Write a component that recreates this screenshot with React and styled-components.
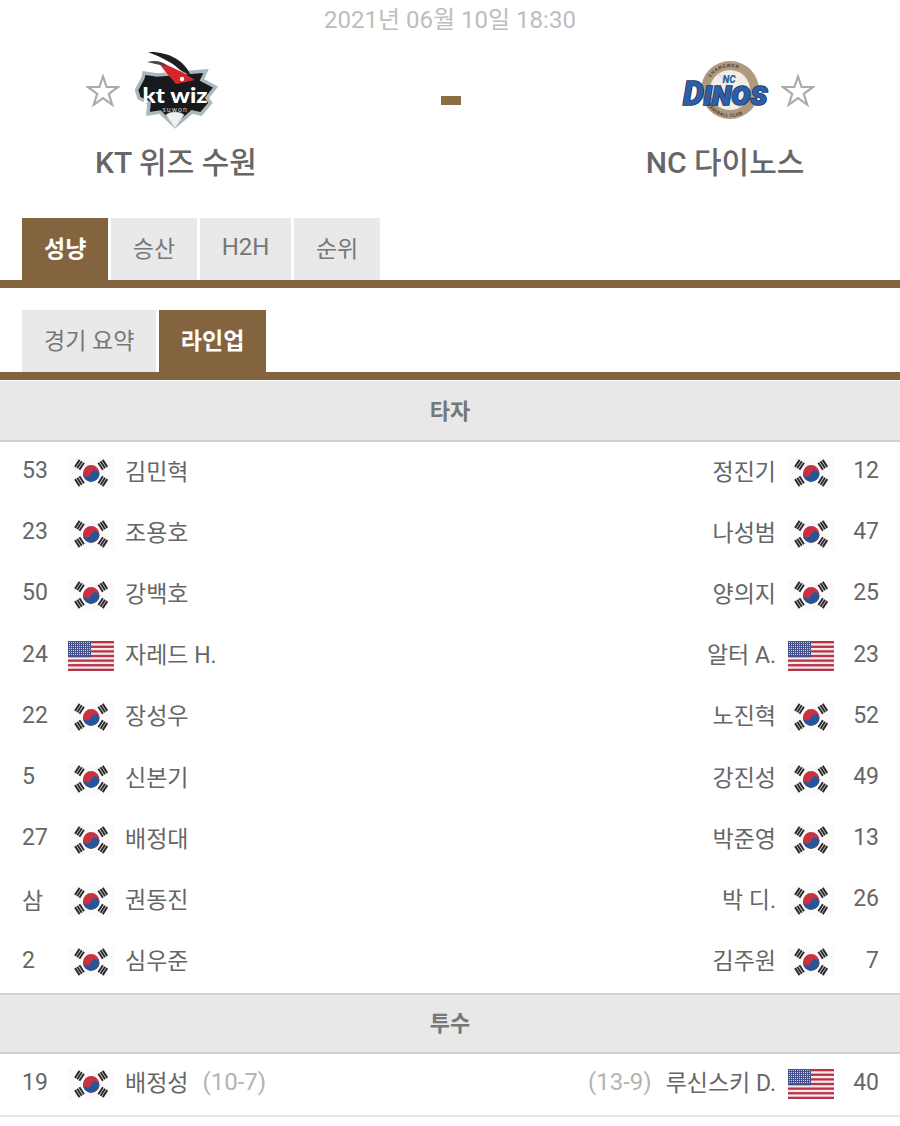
import styled, { createGlobalStyle } from "styled-components"

const GlobalStyle = createGlobalStyle`
  html, body { margin: 0; padding: 0; background: #fff; }
  body { font-family: Roboto, "Noto Sans CJK KR", sans-serif; color: #666; }
  * { box-sizing: border-box; }
`

const Page = styled.div`
  width: 900px;
  height: 1126px;
  overflow: hidden;
`

const DateLine = styled.div`
  height: 42px;
  line-height: 41px;
  text-align: center;
  font-size: 24px;
  color: #bdbdbd;
`

const Match = styled.div`
  display: grid;
  grid-template-columns: 352px 1fr 350px;
  height: 176px;
`

const Team = styled.div`
  display: flex;
  flex-direction: column;
`

const LogoRow = styled.div`
  display: flex;
  align-items: center;
  height: 90px;
  margin-top: 4px;
  gap: ${(p) => p.$gap}px;
  justify-content: ${(p) => (p.$right ? "flex-end" : "flex-start")};
  padding: ${(p) => (p.$right ? "0 85px 0 0" : "0 0 0 86px")};
`

const TeamName = styled.div`
  margin-top: 7px;
  text-align: center;
  font-size: 30px;
  font-weight: 500;
  line-height: 40px;
  color: #666;
`

const Score = styled.div`
  display: flex;
  justify-content: center;
  padding-top: 54px;
`

const ScoreDash = styled.div`
  width: 20px;
  height: 9px;
  background: #8b6d46;
`

const TabRow = styled.div`
  display: flex;
  gap: 2.5px;
  height: 70px;
  padding-left: 22px;
  border-bottom: 8px solid #84643f;
`

const Tab = styled.div`
  display: flex;
  align-items: center;
  justify-content: center;
  padding: 0 22px 5px;
  height: 62px;
  font-size: ${(p) => (p.$latin ? "24px" : "23px")};
  background: ${(p) => (p.$active ? "#84643f" : "#e9e9e9")};
  color: ${(p) => (p.$active ? "#fff" : "#777")};
  font-weight: ${(p) => (p.$active ? 700 : 400)};
`

const SubTabs = styled(TabRow)`
  margin-top: 22px;
`

const SectionHead = styled.div`
  display: flex;
  align-items: center;
  justify-content: center;
  height: 61px;
  padding-bottom: 4px;
  margin-top: ${(p) => (p.$first ? "1px" : "0")};
  background: #e8e8e8;
  border-top: ${(p) => (p.$first ? "0" : "2px solid #d2d2d2")};
  border-bottom: 2px solid #d2d2d2;
  font-size: 22px;
  font-weight: 700;
  color: #777;
`

const Row = styled.div`
  display: flex;
  justify-content: space-between;
  height: 61.2px;
  padding: 0 21px 0 22px;
`

const LastRow = styled(Row)`
  height: 63px;
  border-bottom: 2px solid #e6e6e6;
`

const Side = styled.div`
  display: flex;
  align-items: center;
  padding-bottom: 4px;
  flex-direction: ${(p) => (p.$right ? "row-reverse" : "row")};
  font-size: 23px;
  color: #666;
`

const Num = styled.span`
  width: ${(p) => (p.$right ? "45px" : "46px")};
  text-align: ${(p) => (p.$right ? "right" : "left")};
`

const Name = styled.span`
  margin: ${(p) => (p.$right ? "0 12px 0 0" : "0 0 0 11px")};
  padding-bottom: 2px;
  font-size: 23px;
  white-space: nowrap;
`

const Record = styled.span`
  color: #b4b4b4;
  font-size: 24px;
  margin: ${(p) => (p.$right ? "0 14px 0 0" : "0 0 0 14px")};
`

const FlagBox = styled.svg`
  display: block;
  width: 46px;
  height: 30px;
  margin-top: 4px;
  flex: none;
`

function Star() {
  return (
    <svg width="34" height="34" viewBox="0 0 34 34">
      <polygon
        points="17,2.5 20.6,13 32,13 22.8,19.8 26.2,30.8 17,24.2 7.8,30.8 11.2,19.8 2,13 13.4,13"
        fill="none"
        stroke="#ababab"
        strokeWidth="2.2"
      />
    </svg>
  )
}

// trigram blocks sit square to the line from the centre of the flag
const trigrams = [
  [11.5, 6.8, -57],
  [34.8, 6.8, 57],
  [11.5, 23.2, 57],
  [34.8, 23.2, -57],
]

function KoreaFlag() {
  return (
    <FlagBox viewBox="0 0 46 30">
      <rect width="46" height="30" fill="#fbfbfb" />
      {trigrams.map(([x, y, r]) => (
        <g key={`${x}-${y}`} transform={`translate(${x} ${y}) rotate(${r})`} fill="#2b2b2b">
          <rect x="-4.2" y="-3.6" width="8.4" height="2" />
          <rect x="-4.2" y="-1" width="8.4" height="2" />
          <rect x="-4.2" y="1.6" width="8.4" height="2" />
        </g>
      ))}
      <circle cx="23.2" cy="15.4" r="8.3" fill="#c8313f" />
      <path
        d="M14.9 15.4a8.3 8.3 0 0 0 16.6 0 4.15 4.15 0 0 0-8.3 0 4.15 4.15 0 0 1-8.3 0z"
        fill="#23569b"
        transform="rotate(15 23.2 15.4)"
      />
    </FlagBox>
  )
}

function UsFlag() {
  const stripes = [0, 1, 2, 3, 4, 5, 6]
  const dots = []
  for (let y = 0; y < 7; y++) {
    for (let x = 0; x < 11; x++) {
      dots.push(<rect key={`${x}-${y}`} x={1 + x * 2} y={1 + y * 2} width="1" height="1" fill="#c9cfe2" />)
    }
  }
  return (
    <FlagBox viewBox="0 0 46 30">
      <rect width="46" height="30" fill="#f4eaea" />
      {stripes.map((i) => (
        <rect key={i} y={i * 4.62} width="46" height="2.31" fill="#b8334a" />
      ))}
      <rect width="23" height="16.2" fill="#46508a" />
      {dots}
    </FlagBox>
  )
}

function KtLogo() {
  return (
    <svg width="84" height="82" viewBox="0 0 84 82">
      <path
        d="M1.5 40L8 28 9 23 22 25 71 21 67 30 80.500 37 72 48 75.500 53 66 64 57 62 40 76.500 25 62 13 64 14 53 4 48Z"
        fill="#17191b"
        stroke="#aab8bd"
        strokeWidth="3.5"
        strokeLinejoin="miter"
      />
      <path d="M24 13C33 14 47 22 60 30L41 34C36 28 29 21 24 13Z" fill="#d6262c" />
      <path d="M13 2C32 1 50 10 56 26L45 20C38 13 28 8 13 2Z" fill="#1f1f1f" />
      <path d="M12 12C20 10 27 11 33 16L25 15C21 14 16 13 12 12Z" fill="#454545" />
      <circle cx="47" cy="29" r="2.2" fill="#fff" />
      <path d="M31 65C35 61 45 61 49 65L40 78Z" fill="#f0f0f0" stroke="#c4c4c4" strokeWidth="0.6" />
      <text x="40" y="53" textAnchor="middle" fontFamily="Lato, Roboto, sans-serif" fontSize="20" fontWeight="900" fill="#fff" textLength="65" lengthAdjust="spacingAndGlyphs">
        kt wiz
      </text>
      <text x="40" y="61.500" textAnchor="middle" fontFamily="Roboto, sans-serif" fontSize="7" fill="#c8c8c8" letterSpacing="1">
        suwon
      </text>
    </svg>
  )
}

function DinosLogo() {
  return (
    <svg width="88" height="64" viewBox="0 -1 88 64">
      <circle cx="48" cy="30" r="29" fill="#b09a7f" />
      <circle cx="48" cy="30" r="20" fill="#f1eeea" />
      <path d="M36 14C46 22 54 38 58 48" fill="none" stroke="#d5cfc7" strokeWidth="1" />
      <path id="dinosTop" d="M25 30a23 23 0 0 1 46 0" fill="none" />
      <text fontFamily="Roboto, sans-serif" fontSize="4.600" fontWeight="700" fill="#4a3d2f" letterSpacing="0.7">
        <textPath href="#dinosTop" startOffset="18%">CHANGWON</textPath>
      </text>
      <path id="dinosBottom" d="M21 30a27 27 0 0 0 54 0" fill="none" />
      <text fontFamily="Roboto, sans-serif" fontSize="4.600" fontWeight="700" fill="#4a3d2f" letterSpacing="0.4">
        <textPath href="#dinosBottom" startOffset="18%">BASEBALL CLUB</textPath>
      </text>
      <text x="47" y="23" textAnchor="middle" fontFamily="Roboto, sans-serif" fontSize="10" fontWeight="900" fontStyle="italic" fill="#2a5fa0">
        NC
      </text>
      <text
        x="1"
        y="45"
        fontFamily="Roboto, sans-serif"
        fontSize="34"
        fontWeight="900"
        fontStyle="italic"
        fontVariant="small-caps"
        fill="#2e5fa6"
        stroke="#17345f"
        strokeWidth="1.600"
        paintOrder="stroke"
        textLength="85"
        lengthAdjust="spacingAndGlyphs"
      >
        Dinos
      </text>
    </svg>
  )
}

const batters = [
  ["53", "kr", "김민혁", "정진기", "kr", "12"],
  ["23", "kr", "조용호", "나성범", "kr", "47"],
  ["50", "kr", "강백호", "양의지", "kr", "25"],
  ["24", "us", "자레드 H.", "알터 A.", "us", "23"],
  ["22", "kr", "장성우", "노진혁", "kr", "52"],
  ["5", "kr", "신본기", "강진성", "kr", "49"],
  ["27", "kr", "배정대", "박준영", "kr", "13"],
  ["삼", "kr", "권동진", "박 디.", "kr", "26"],
  ["2", "kr", "심우준", "김주원", "kr", "7"],
]

function Flag({ code }) {
  return code === "us" ? <UsFlag /> : <KoreaFlag />
}

export default function App() {
  return (
    <Page>
      <GlobalStyle />
      <DateLine>2021년 06월 10일 18:30</DateLine>
      <Match>
        <Team>
          <LogoRow $gap={15}>
            <Star />
            <KtLogo />
          </LogoRow>
          <TeamName>KT 위즈 수원</TeamName>
        </Team>
        <Score>
          <ScoreDash />
        </Score>
        <Team>
          <LogoRow $right $gap={11}>
            <DinosLogo />
            <Star />
          </LogoRow>
          <TeamName>NC 다이노스</TeamName>
        </Team>
      </Match>
      <TabRow>
        <Tab $active>성냥</Tab>
        <Tab>승산</Tab>
        <Tab $latin>H2H</Tab>
        <Tab>순위</Tab>
      </TabRow>
      <SubTabs>
        <Tab>경기 요약</Tab>
        <Tab $active>라인업</Tab>
      </SubTabs>
      <SectionHead $first>타자</SectionHead>
      {batters.map(([homeNum, homeFlag, homeName, awayName, awayFlag, awayNum]) => (
        <Row key={homeNum}>
          <Side>
            <Num>{homeNum}</Num>
            <Flag code={homeFlag} />
            <Name>{homeName}</Name>
          </Side>
          <Side $right>
            <Num $right>{awayNum}</Num>
            <Flag code={awayFlag} />
            <Name $right>{awayName}</Name>
          </Side>
        </Row>
      ))}
      <SectionHead>투수</SectionHead>
      <LastRow>
        <Side>
          <Num>19</Num>
          <KoreaFlag />
          <Name>배정성</Name>
          <Record>(10-7)</Record>
        </Side>
        <Side $right>
          <Num $right>40</Num>
          <UsFlag />
          <Name $right>루신스키 D.</Name>
          <Record $right>(13-9)</Record>
        </Side>
      </LastRow>
    </Page>
  )
}
